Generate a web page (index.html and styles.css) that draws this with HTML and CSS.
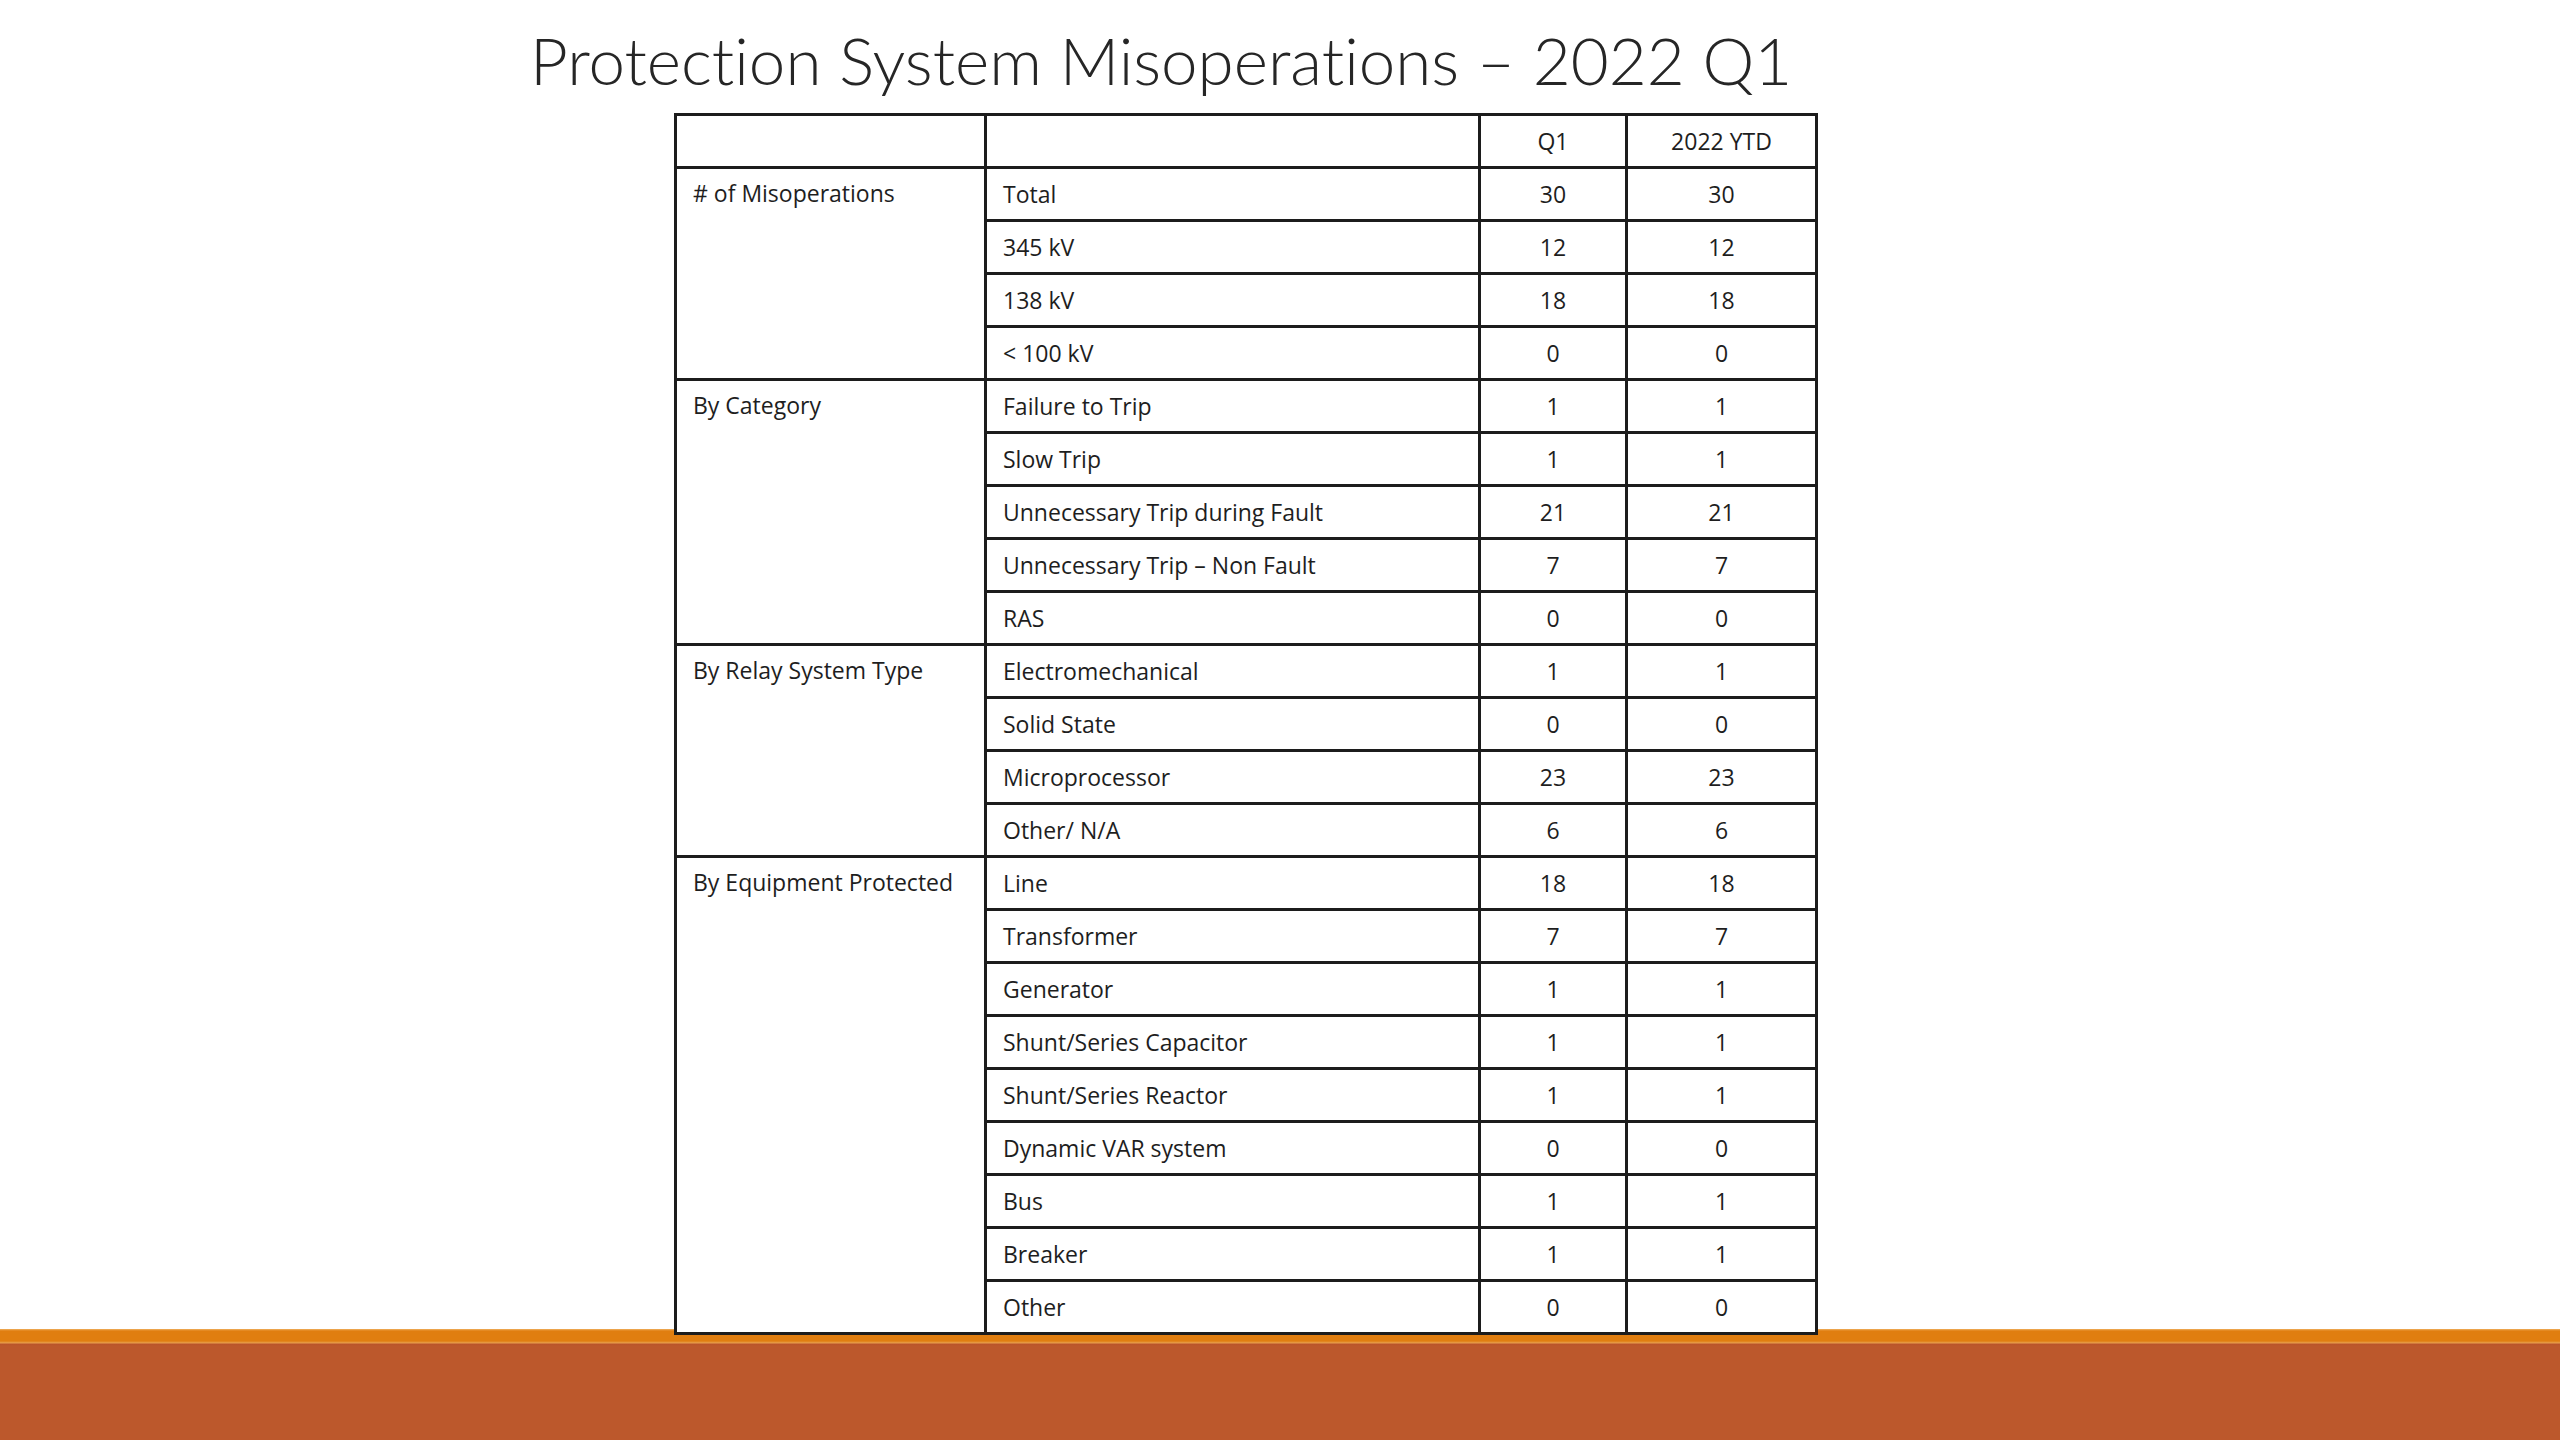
FILE: index.html
```html
<!DOCTYPE html>
<html lang="en">
<head>
<meta charset="utf-8">
<title>Protection System Misoperations – 2022 Q1</title>
<link rel="stylesheet" href="styles.css">
</head>
<body>
<div class="slide">
  <h1 class="title">Protection System Misoperations – 2022 Q1</h1>
  <table class="data">
    <colgroup>
      <col class="c-group">
      <col class="c-item">
      <col class="c-q1">
      <col class="c-ytd">
    </colgroup>
    <thead>
      <tr><th></th><th></th><th class="num">Q1</th><th class="num">2022 YTD</th></tr>
    </thead>
    <tbody>
      <tr><td class="grp" rowspan="4"># of Misoperations</td><td>Total</td><td class="num">30</td><td class="num">30</td></tr>
      <tr><td>345 kV</td><td class="num">12</td><td class="num">12</td></tr>
      <tr><td>138 kV</td><td class="num">18</td><td class="num">18</td></tr>
      <tr><td>&lt; 100 kV</td><td class="num">0</td><td class="num">0</td></tr>

      <tr><td class="grp" rowspan="5">By Category</td><td>Failure to Trip</td><td class="num">1</td><td class="num">1</td></tr>
      <tr><td>Slow Trip</td><td class="num">1</td><td class="num">1</td></tr>
      <tr><td>Unnecessary Trip during Fault</td><td class="num">21</td><td class="num">21</td></tr>
      <tr><td>Unnecessary Trip – Non Fault</td><td class="num">7</td><td class="num">7</td></tr>
      <tr><td>RAS</td><td class="num">0</td><td class="num">0</td></tr>

      <tr><td class="grp" rowspan="4">By Relay System Type</td><td>Electromechanical</td><td class="num">1</td><td class="num">1</td></tr>
      <tr><td>Solid State</td><td class="num">0</td><td class="num">0</td></tr>
      <tr><td>Microprocessor</td><td class="num">23</td><td class="num">23</td></tr>
      <tr><td>Other/ N/A</td><td class="num">6</td><td class="num">6</td></tr>

      <tr><td class="grp" rowspan="9">By Equipment Protected</td><td>Line</td><td class="num">18</td><td class="num">18</td></tr>
      <tr><td>Transformer</td><td class="num">7</td><td class="num">7</td></tr>
      <tr><td>Generator</td><td class="num">1</td><td class="num">1</td></tr>
      <tr><td>Shunt/Series Capacitor</td><td class="num">1</td><td class="num">1</td></tr>
      <tr><td>Shunt/Series Reactor</td><td class="num">1</td><td class="num">1</td></tr>
      <tr><td>Dynamic VAR system</td><td class="num">0</td><td class="num">0</td></tr>
      <tr><td>Bus</td><td class="num">1</td><td class="num">1</td></tr>
      <tr><td>Breaker</td><td class="num">1</td><td class="num">1</td></tr>
      <tr><td>Other</td><td class="num">0</td><td class="num">0</td></tr>
    </tbody>
  </table>
</div>
</body>
</html>
```

FILE: styles.css
```css
html, body {
  margin: 0;
  padding: 0;
}

body {
  width: 2560px;
  height: 1440px;
  overflow: hidden;
}

.slide {
  width: 2560px;
  height: 1440px;
  box-sizing: border-box;
  display: flex;
  flex-direction: column;
  align-items: flex-start;
  background:
    linear-gradient(to bottom,
      #ffffff 0,
      #ffffff 1329px,
      #f0b060 1329px,
      #e07e10 1331px,
      #e07e10 1341px,
      #e8a050 1343px,
      #b9532a 1344px,
      #bc582c 1346px,
      #bc582c 1440px);
}

.title {
  margin: 0;
  padding: 20px 0 0 530px;
  font-family: "Lato", "Liberation Sans", sans-serif;
  font-weight: 300;
  font-size: 65.5px;
  line-height: 80px;
  color: #262626;
  white-space: nowrap;
  font-variant-ligatures: none;
}

.data {
  margin: 13px 0 0 674px;
  border-collapse: collapse;
  table-layout: fixed;
  width: 1141px;
  background: #ffffff;
  font-family: "Open Sans", "Liberation Sans", sans-serif;
  font-size: 23px;
  color: #1e1e1e;
}

.c-group { width: 310px; }
.c-item { width: 494px; }
.c-q1 { width: 147px; }
.c-ytd { width: 190px; }

.data tr {
  height: 53px;
}

.data th,
.data td {
  border: 3px solid #1c1c1c;
  padding: 0 16px;
  height: 47px;
  font-weight: 400;
  text-align: left;
  vertical-align: middle;
  white-space: nowrap;
  line-height: 26px;
}

.data th.num,
.data td.num {
  text-align: center;
  padding: 0 4px;
}

.data td.grp {
  vertical-align: top;
  padding-top: 11px;
}
```
